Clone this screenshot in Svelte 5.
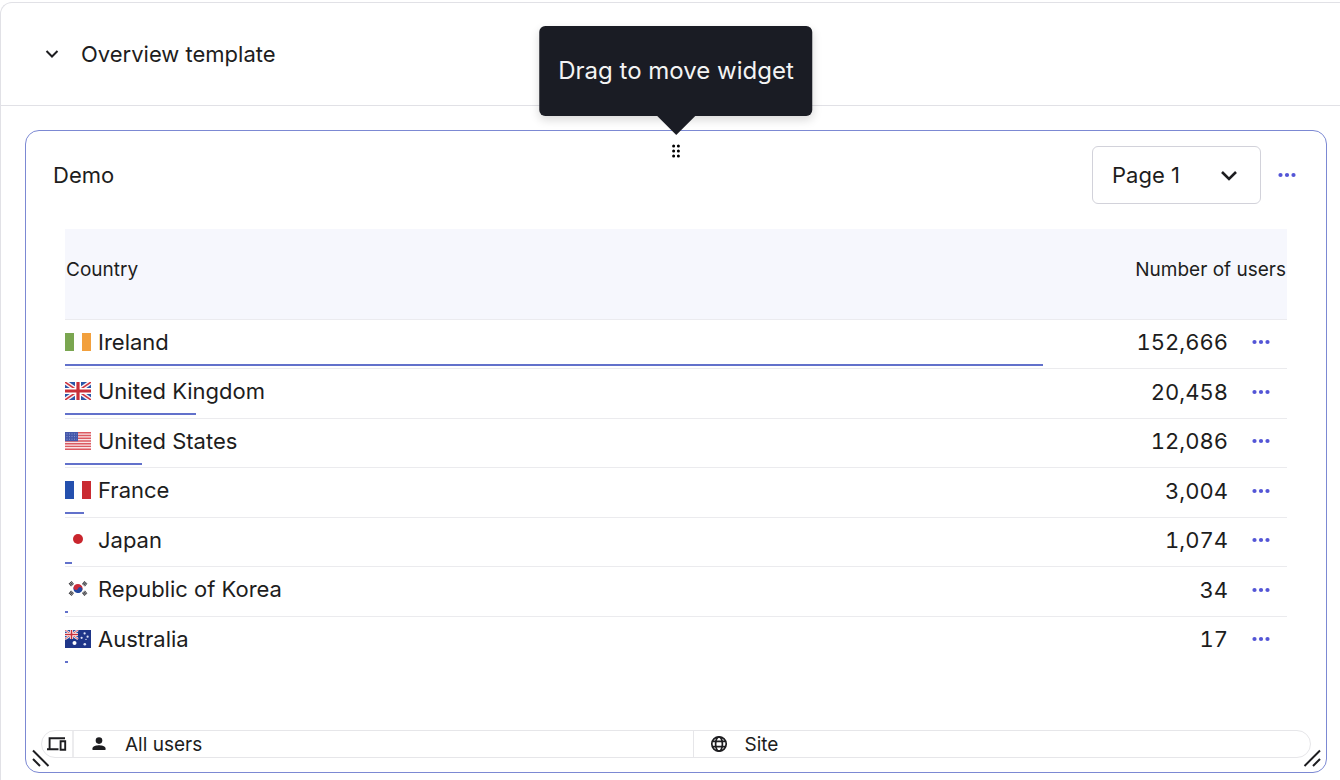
<script>
  const rows = [
    { flag: 'ie', name: 'Ireland', users: 152666 },
    { flag: 'gb', name: 'United Kingdom', users: 20458 },
    { flag: 'us', name: 'United States', users: 12086 },
    { flag: 'fr', name: 'France', users: 3004 },
    { flag: 'jp', name: 'Japan', users: 1074 },
    { flag: 'kr', name: 'Republic of Korea', users: 34 },
    { flag: 'au', name: 'Australia', users: 17 }
  ];
  const most = Math.max(...rows.map((r) => r.users));
  let page = $state('Page 1');
</script>

{#snippet dots()}
  <svg class="dots" viewBox="0 0 18 6" width="18" height="6" aria-hidden="true">
    <circle cx="2.5" cy="3" r="2.1" /><circle cx="9" cy="3" r="2.1" /><circle cx="15.5" cy="3" r="2.1" />
  </svg>
{/snippet}

{#snippet unionJack()}
  <rect width="26" height="18" fill="#2b55a8" />
  <path d="M0 0L26 18M26 0L0 18" stroke="#f6f2f6" stroke-width="4.4" />
  <path d="M0 0L26 18M26 0L0 18" stroke="#d0343e" stroke-width="1.5" />
  <path d="M13 0V18M0 9H26" stroke="#fff" stroke-width="6" />
  <path d="M13 0V18M0 9H26" stroke="#c9303a" stroke-width="3.2" />
{/snippet}

{#snippet flagIcon(code)}
  <svg class="flag" viewBox="0 0 26 18" width="26" height="18" aria-hidden="true">
    {#if code === 'ie'}
      <rect width="9" height="18" fill="#7aa650" /><rect x="17" width="9" height="18" fill="#f2a03d" />
    {:else if code === 'fr'}
      <rect width="9" height="18" fill="#2450ae" /><rect x="17" width="9" height="18" fill="#c92b32" />
    {:else if code === 'gb'}
      {@render unionJack()}
    {:else if code === 'us'}
      <rect width="26" height="18" fill="#f8e4e6" />
      <path d="M0 .8H26M0 3.5H26M0 6.2H26M0 9H26M0 11.7H26M0 14.4H26M0 17.2H26" stroke="#dc5a62" stroke-width="1.4" />
      <rect width="13" height="9.2" fill="#4558ab" />
      <path d="M1.5 2H12M1.5 4.6H12M1.5 7.2H12" stroke="#8b98d0" stroke-width="1" stroke-dasharray="1 1.5" />
    {:else if code === 'jp'}
      <circle cx="13" cy="8" r="5" fill="#c9252d" />
    {:else if code === 'kr'}
      <g transform="rotate(20 13 8.5)">
        <path d="M8.4 8.5a4.6 4.6 0 0 1 9.2 0z" fill="#ca2b3a" />
        <path d="M8.4 8.5a4.6 4.6 0 0 0 9.2 0z" fill="#2448a0" />
        <circle cx="10.7" cy="8.5" r="2.3" fill="#ca2b3a" /><circle cx="15.3" cy="8.5" r="2.3" fill="#2448a0" />
      </g>
      <g stroke="#3f3f44" stroke-width="3.8" stroke-dasharray="1.2 .3">
        <path d="M4.8 5L7.800 2.500M18.200 2.500L21.200 5M4.800 12L7.800 14.500M18.200 14.500L21.200 12" />
      </g>
    {:else}
      <rect width="26" height="18" fill="#1f3689" />
      <g transform="scale(.5)">{@render unionJack()}</g>
      <circle cx="9.5" cy="13" r="2" fill="#fff" />
      <g fill="#dfe4f7">
        <circle cx="19.6" cy="3.4" r="1.1" /><circle cx="16.6" cy="7.8" r="1.1" /><circle cx="22.6" cy="6.7" r="1.1" />
        <circle cx="19.8" cy="14.2" r="1.3" /><circle cx="21" cy="9.4" r=".7" />
      </g>
    {/if}
  </svg>
{/snippet}

<main class="panel">
  <header class="panel-head">
    <button class="toggle" aria-expanded="true" aria-label="Collapse section">
      <svg viewBox="0 0 14 10" width="14" height="10"><path d="M1.5 2L7 7.5L12.5 2" fill="none" stroke="currentColor" stroke-width="2" /></svg>
    </button>
    <h1>Overview template</h1>
  </header>

  <section class="widget" aria-labelledby="widget-title">
    <div class="tooltip" role="tooltip" id="drag-tip">Drag to move widget</div>
    <button class="grip" aria-label="Move" aria-describedby="drag-tip">
      <svg viewBox="0 0 10 14" width="10" height="14">
        <circle cx="2.6" cy="2" r="1.5" /><circle cx="7.4" cy="2" r="1.5" />
        <circle cx="2.6" cy="7" r="1.5" /><circle cx="7.4" cy="7" r="1.5" />
        <circle cx="2.6" cy="12" r="1.5" /><circle cx="7.4" cy="12" r="1.5" />
      </svg>
    </button>

    <div class="widget-head">
      <h2 id="widget-title">Demo</h2>
      <div class="select">
        <select aria-label="Page" bind:value={page}>
          <option>Page 1</option>
          <option>Page 2</option>
        </select>
        <svg viewBox="0 0 18 12" width="18" height="12" aria-hidden="true"><path d="M2 2L9 9L16 2" fill="none" stroke="currentColor" stroke-width="2.6" /></svg>
      </div>
      <button class="more" aria-label="Widget options">{@render dots()}</button>
    </div>

    <table>
      <colgroup><col class="c-country" /><col /><col class="c-more" /></colgroup>
      <thead>
        <tr><th scope="col">Country</th><th scope="col" colspan="2" class="num-head">Number of users</th></tr>
      </thead>
      <tbody>
        {#each rows as row}
          <tr>
            <td>
              <div class="country">
                <span class="label">{@render flagIcon(row.flag)}{row.name}</span>
                <span class="bar" style:width="{(row.users / most) * 100}%"></span>
              </div>
            </td>
            <td class="num">{row.users.toLocaleString('en-US')}</td>
            <td class="act"><button class="more" aria-label="Options for {row.name}">{@render dots()}</button></td>
          </tr>
        {/each}
      </tbody>
    </table>

    <footer class="filters">
      <span class="device">
        <svg viewBox="0 0 20 16" width="20" height="16" aria-hidden="true">
          <path d="M2.6 12.5V2.2H18M0 13.3H11.5M13.6 5.2h4.6v8.6h-4.6z" fill="none" stroke="currentColor" stroke-width="1.9" />
        </svg>
      </span>
      <span class="filter">
        <svg viewBox="0 0 14 14" width="14" height="14" aria-hidden="true">
          <circle cx="7" cy="3.6" r="3.3" fill="currentColor" /><path d="M.5 13V11.3C.5 9 4.8 8.2 7 8.2S13.5 9 13.5 11.3V13z" fill="currentColor" />
        </svg>
        <span class="filter-name">All users</span>
      </span>
      <span class="filter">
        <svg class="globe" viewBox="0 0 18 18" width="18" height="18" aria-hidden="true">
          <g fill="none" stroke="currentColor" stroke-width="1.7"><circle cx="9" cy="9" r="7.2" /><ellipse cx="9" cy="9" rx="3.4" ry="7.2" /><path d="M2.2 6.4H15.8M2.2 11.6H15.8" /></g>
        </svg>
        <span class="filter-name">Site</span>
      </span>
    </footer>

    <svg class="resize left" viewBox="0 0 18 18" width="18" height="18" aria-hidden="true"><path d="M1 1.5L16.5 17M1 10L8 17" /></svg>
    <svg class="resize right" viewBox="0 0 18 18" width="18" height="18" aria-hidden="true"><path d="M17 1.5L1.5 17M17 10L10 17" /></svg>
  </section>
</main>

<style>
  :global(body) { margin: 0; background: #fff; }
  .panel {
    box-sizing: border-box;
    min-height: calc(100vh - 2px);
    margin-top: 2px;
    border: 1px solid #e1e1e6;
    border-width: 1px 0 0 1px;
    border-radius: 12px 0 0 0;
    font-family: Inter, "Liberation Sans", sans-serif;
    font-size: 22px;
    line-height: 28px;
    color: #1d1d20;
  }
  h1, h2 { margin: 0; font: inherit; }
  button { padding: 0; border: 0; background: none; color: inherit; font: inherit; cursor: pointer; }
  svg { display: block; flex: none; }
  .panel-head {
    display: flex;
    align-items: center;
    gap: 22px;
    padding: 37px 44px;
    border-bottom: 1px solid #e1e1e6;
  }
  .widget {
    position: relative;
    margin: 24px 13px 0 24px;
    padding: 15px 15px 14px;
    border: 1px solid #7c89d3;
    border-radius: 14px;
  }
  .tooltip {
    position: absolute;
    left: 50%;
    bottom: calc(100% + 15px);
    transform: translateX(-50%);
    padding: 31px 19px;
    border-radius: 6px;
    background: #1a1c24;
    color: #f3f3f3;
    font-size: 24px;
    white-space: nowrap;
    box-shadow: 0 4px 10px rgba(0, 0, 0, .15);
  }
  .tooltip::after {
    content: "";
    position: absolute;
    top: 100%;
    left: 50%;
    margin-left: -19px;
    border: 19px solid transparent;
    border-top-color: #1a1c24;
    border-bottom: 0;
  }
  .grip { position: absolute; top: 13px; left: 50%; margin-left: -5px; cursor: grab; }
  .widget-head { display: flex; align-items: center; padding: 0 15px 0 12px; }
  .widget-head h2 { flex: 1; }
  .select { position: relative; margin-right: 17px; }
  .select select {
    display: block;
    appearance: none;
    width: 169px;
    height: 58px;
    padding: 0 48px 0 19px;
    border: 1px solid #d2d2da;
    border-radius: 6px;
    background: #fff;
    color: inherit;
    font: inherit;
  }
  .select svg { position: absolute; right: 23px; top: 24px; pointer-events: none; }
  .dots { fill: #5355d6; }
  table {
    width: calc(100% - 48px);
    margin: 25px 24px 64px;
    table-layout: fixed;
    border-collapse: separate;
    border-spacing: 0;
  }
  .c-country { width: 80%; }
  .c-more { width: 59px; }
  th {
    height: 91px;
    box-sizing: border-box;
    padding: 0 0 8px 1px;
    border-bottom: 1px solid #ebebef;
    background: #f6f7fd;
    font-size: 19px;
    font-weight: 400;
    text-align: left;
  }
  th.num-head { padding-right: 1px; text-align: right; }
  td { height: 49px; padding: 0; border-bottom: 1px solid #ebebee; }
  tr:nth-child(odd) td { height: 48px; }
  tr:last-child td { border-bottom-color: transparent; }
  .country { display: flex; flex-direction: column; gap: 8px; padding-top: 5px; }
  .label { display: flex; align-items: center; gap: 7px; }
  .bar { height: 2px; min-width: 3px; background: #6271cb; }
  .num { padding-bottom: 4px; text-align: right; font-feature-settings: "tnum"; }
  td.num { height: 45px; }
  tr:nth-child(odd) td.num { height: 44px; }
  .act .more { display: block; margin: 0 auto 4px 24px; }
  .filters {
    display: flex;
    height: 26px;
    border: 1px solid #e6e6e9;
    border-radius: 14px;
    overflow: hidden;
    font-size: 19px;
  }
  .device { display: flex; align-items: center; padding: 0 5px; border-right: 2px solid #ececee; }
  .filter { display: flex; align-items: center; flex: 1; gap: 19px; padding-left: 18px; }
  .filter + .filter { padding-left: 16px; gap: 17px; border-left: 1px solid #e6e6e9; }
  .filter-name { padding-top: 2px; }
  .resize { position: absolute; bottom: 5px; fill: none; stroke: #1d1d20; stroke-width: 2; }
  .resize.left { left: 6px; }
  .resize.right { right: 5px; }
</style>
